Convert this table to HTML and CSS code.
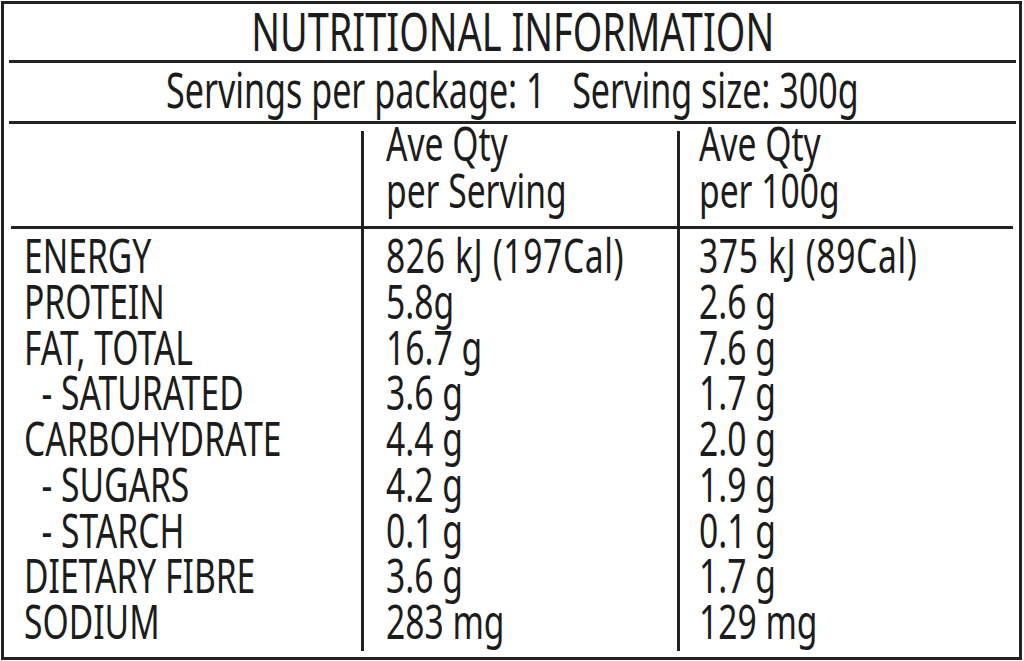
FILE: index.html
```html
<!DOCTYPE html>
<html lang="en">
<head>
<meta charset="utf-8">
<title>Nutritional Information</title>
<link rel="stylesheet" href="styles.css">
</head>
<body>
<div class="panel">
  <div class="title"><span class="sqc">NUTRITIONAL INFORMATION</span></div>
  <div class="rule"></div>
  <div class="servings"><span class="sqc">Servings per package: 1&nbsp;&nbsp;&nbsp;Serving size: 300g</span></div>
  <div class="rule"></div>
  <div class="grid">
    <div class="cell c1 head"></div>
    <div class="cell c2 head"><div class="sq">Ave Qty<br>per Serving</div></div>
    <div class="cell c3 head"><div class="sq">Ave Qty<br>per 100g</div></div>
    <div class="rule span"></div>
    <div class="cell c1 body"><div class="sq">ENERGY<br>PROTEIN<br>FAT, TOTAL<br>&nbsp;&nbsp;- SATURATED<br>CARBOHYDRATE<br>&nbsp;&nbsp;- SUGARS<br>&nbsp;&nbsp;- STARCH<br>DIETARY FIBRE<br>SODIUM</div></div>
    <div class="cell c2 body"><div class="sq"><span class="wide">826 kJ (197Cal)</span><br>5.8g<br>16.7 g<br>3.6 g<br>4.4 g<br>4.2 g<br>0.1 g<br>3.6 g<br>283 mg</div></div>
    <div class="cell c3 body"><div class="sq"><span class="wide">375 kJ (89Cal)</span><br>2.6 g<br>7.6 g<br>1.7 g<br>2.0 g<br>1.9 g<br>0.1 g<br>1.7 g<br>129 mg</div></div>
  </div>
</div>
</body>
</html>
```

FILE: styles.css
```css
html, body {
  margin: 0;
  padding: 0;
  background: #ffffff;
}
body {
  font-family: "Noto Sans", "Open Sans", sans-serif;
  color: #1c1c1c;
}
.panel {
  margin: 1px;
  width: 1021px;
  height: 659px;
  box-sizing: border-box;
  border: 3px solid #222;
  padding: 0 3px 0 5px;
  display: flex;
  flex-direction: column;
}
.rule {
  height: 3px;
  background: #222;
  flex: none;
}
.title,
.servings {
  display: flex;
  justify-content: center;
  white-space: nowrap;
}
.title {
  height: 56px;
  font-size: 53px;
  line-height: 54px;
}
.servings {
  height: 58px;
  font-size: 49px;
  line-height: 53px;
}
.sqc {
  display: block;
  flex: none;
  transform: scaleX(0.7);
  transform-origin: 50% 0;
}
.title .sqc {
  transform: scaleX(0.715);
}
.servings .sqc {
  transform: scaleX(0.695);
}
.sq {
  width: max-content;
  white-space: nowrap;
  transform: scaleX(0.7);
  transform-origin: 0 0;
}
.wide {
  letter-spacing: 0.9px;
}
.grid {
  margin-top: 7px;
  margin-bottom: 6px;
  flex: 1;
  display: grid;
  grid-template-columns: 352px 316px 1fr;
  grid-template-rows: 95px 3px 1fr;
  font-size: 48px;
  line-height: 45.75px;
}
.span {
  grid-column: 1 / -1;
  margin-left: 2px;
  margin-right: 3px;
}
.cell {
  min-width: 0;
}
.c1 { padding-left: 15px; }
.c2 { border-left: 3px solid #222; padding-left: 22px; }
.c3 { border-left: 3px solid #222; padding-left: 19px; }
.head .sq {
  line-height: 47px;
  margin-top: -12px;
}
.body { padding-top: 3px; }
```
